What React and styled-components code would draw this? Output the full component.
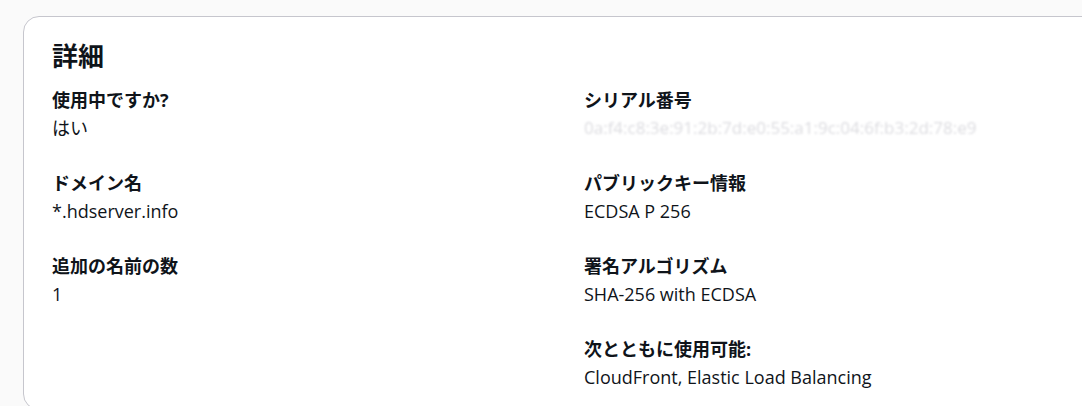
import React from 'react'
import styled, { createGlobalStyle } from 'styled-components'

const Global = createGlobalStyle`
  html, body {
    margin: 0;
    padding: 0;
    background: #fafafa;
    overflow: hidden;
  }
  body {
    font-family: "Open Sans", "Noto Sans CJK JP", sans-serif;
    color: #0f141a;
  }
`

const Page = styled.div`
  height: 406px;
  padding: 16px 0 0 23px;
  box-sizing: border-box;
  overflow: hidden;
`

const Card = styled.section`
  width: 1120px;
  height: 394px;
  box-sizing: border-box;
  background: #ffffff;
  border: 1px solid #c6c6cd;
  border-radius: 16px;
  padding: 22px 28px 0 28px;
`

const Title = styled.h2`
  margin: 0 0 17px 0;
  font-size: 26px;
  line-height: 32px;
  font-weight: 700;
  font-family: "Noto Sans CJK JP", sans-serif;
`

const Columns = styled.div`
  display: grid;
  grid-template-columns: 532px 1fr;
`

const Column = styled.div`
  display: flex;
  flex-direction: column;
  gap: 31px;
`

const Item = styled.div`
  display: flex;
  flex-direction: column;
  gap: 4px;
`

const Label = styled.div`
  font-size: 18px;
  line-height: 24px;
  font-weight: 700;
  font-family: "Open Sans", "Noto Sans CJK JP", sans-serif;
`

const Value = styled.div`
  font-size: ${p => (p.$masked ? '17px' : '18px')};
  line-height: 24px;
  font-weight: 400;
  font-family: "Open Sans", "Noto Sans CJK JP", sans-serif;
  color: ${p => (p.$masked ? '#dcdce0' : '#0f141a')};
  filter: ${p => (p.$masked ? 'blur(0.9px)' : 'none')};
  white-space: nowrap;
`

const left = [
  ['使用中ですか?', 'はい'],
  ['ドメイン名', '*.hdserver.info'],
  ['追加の名前の数', '1'],
]

const right = [
  ['シリアル番号', '0a:f4:c8:3e:91:2b:7d:e0:55:a1:9c:04:6f:b3:2d:78:e9', true],
  ['パブリックキー情報', 'ECDSA P 256'],
  ['署名アルゴリズム', 'SHA-256 with ECDSA'],
  ['次とともに使用可能:', 'CloudFront, Elastic Load Balancing'],
]

const Field = ({ label, value, masked }) => (
  <Item>
    <Label>{label}</Label>
    <Value $masked={masked}>{value}</Value>
  </Item>
)

export default function App() {
  return (
    <Page>
      <Global />
      <Card>
        <Title>詳細</Title>
        <Columns>
          <Column>
            {left.map(([l, v]) => (
              <Field key={l} label={l} value={v} />
            ))}
          </Column>
          <Column>
            {right.map(([l, v, m]) => (
              <Field key={l} label={l} value={v} masked={m} />
            ))}
          </Column>
        </Columns>
      </Card>
    </Page>
  )
}
